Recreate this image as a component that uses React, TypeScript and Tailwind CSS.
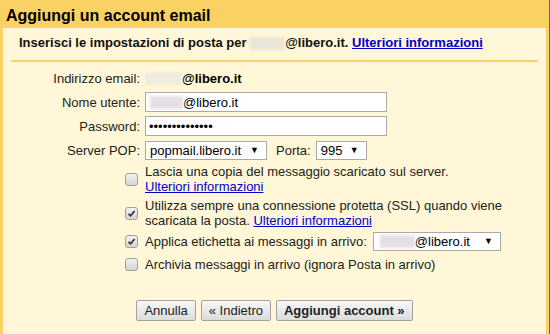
import React from 'react'

const font = "font-['Liberation_Sans',Arial,sans-serif]"

function Blur({ w, tone = 'bg-[#ebe5d8]' }: { w: number; tone?: string }) {
  return <span className={`inline-block h-[13px] align-middle blur-[1.5px] ${tone}`} style={{ width: w }} />
}

function Arrow() {
  return <span className="text-[9px] leading-none text-black">▼</span>
}

function Select({ children, className }: { children: React.ReactNode; className: string }) {
  return (
    <div className={`flex items-center justify-between border border-[#a9a9a9] bg-white pl-[4px] pr-[7px] text-black ${className}`}>
      <span className="flex items-center">{children}</span>
      <Arrow />
    </div>
  )
}

function Checkbox({ checked }: { checked?: boolean }) {
  return (
    <span className="flex h-[13px] w-[13px] items-center justify-center rounded-[3px] border border-[#a0a0a0] bg-gradient-to-b from-[#f2f2f2] to-[#d4d4d4]">
      {checked && (
        <svg width="9" height="9" viewBox="0 0 9 9">
          <path d="M1.5 4.8 L3.6 6.8 L7.6 2" fill="none" stroke="#333" strokeWidth="1.7" />
        </svg>
      )}
    </span>
  )
}

function Row({ label, children, className = '' }: { label: React.ReactNode; children: React.ReactNode; className?: string }) {
  return (
    <div className={`flex items-center ${className}`}>
      <div className="flex w-[137px] shrink-0 justify-end">{label}</div>
      <div className="ml-[5px] flex items-center">{children}</div>
    </div>
  )
}

function Link({ children }: { children: React.ReactNode }) {
  return <span className="text-[#0000cc] underline">{children}</span>
}

function Button({ children, bold }: { children: React.ReactNode; bold?: boolean }) {
  return (
    <button className={`h-[21px] rounded-[2px] border border-[#a3a3a3] bg-gradient-to-b from-[#f8f8f8] to-[#dcdcdc] px-[7px] text-[13px] leading-[15px] text-[#222] ${bold ? 'font-bold' : ''}`}>
      {children}
    </button>
  )
}

export default function App() {
  return (
    <div className={`h-[334px] w-[550px] overflow-hidden border-r border-[#4c66b5] bg-[#fad163] text-[13px] leading-[15px] text-[#222] ${font}`}>
      <div className="h-[28px] pl-[6px] pt-[6px] text-[16px] font-bold leading-[19px] text-black">
        Aggiungi un account email
      </div>
      <div className="mx-[3px] h-[306px] bg-[#fff7d7]">
        {/* intro */}
        <div className="mx-[8px] border-b-2 border-[#fad163] pb-[10px] pl-[8px] pt-[7px] font-bold text-[#111]">
          Inserisci le impostazioni di posta per <Blur w={35} />@libero.it. <Link>Ulteriori informazioni</Link>
        </div>

        {/* form */}
        <div className="flex flex-col pt-[6px]">
          <Row label="Indirizzo email:" className="h-[20px]">
            <Blur w={37} tone="bg-[#f0ebde]" />
            <span className="font-bold text-black">@libero.it</span>
          </Row>
          <Row label="Nome utente:" className="mt-[4px] h-[20px]">
            <div className="flex h-[20px] w-[242px] items-center border border-[#a9a9a9] bg-white pl-[4px] text-black">
              <Blur w={33} tone="bg-[#e6dfe6]" />@libero.it
            </div>
          </Row>
          <Row label="Password:" className="mt-[4px] h-[20px]">
            <div className="flex h-[20px] w-[242px] items-center border border-[#a9a9a9] bg-white pl-[3px] text-black">
              ••••••••••••••
            </div>
          </Row>
          <Row label="Server POP:" className="mt-[5px] h-[19px]">
            <Select className="h-[19px] w-[122px]">popmail.libero.it</Select>
            <span className="ml-[9px]">Porta:</span>
            <Select className="ml-[5px] h-[19px] w-[51px]">995</Select>
          </Row>

          <Row label={<span className="mr-[2px]"><Checkbox /></span>} className="mt-[4px]">
            <span>
              Lascia una copia del messaggio scaricato sul server.
              <br />
              <Link>Ulteriori informazioni</Link>
            </span>
          </Row>
          <Row label={<span className="mr-[2px]"><Checkbox checked /></span>} className="mt-[4px]">
            <span>
              Utilizza sempre una connessione protetta (SSL) quando viene
              <br />
              scaricata la posta. <Link>Ulteriori informazioni</Link>
            </span>
          </Row>
          <Row label={<span className="mr-[2px]"><Checkbox checked /></span>} className="mt-[4px] h-[19px]">
            <span>Applica etichetta ai messaggi in arrivo:</span>
            <Select className="ml-[6px] h-[19px] w-[128px] pl-[6px]">
              <Blur w={35} tone="bg-[#e6dfe6]" />@libero.it
            </Select>
          </Row>
          <Row label={<span className="mr-[2px]"><Checkbox /></span>} className="mt-[6px]">
            <span>Archivia messaggi in arrivo (ignora Posta in arrivo)</span>
          </Row>

          <div className="mt-[28px] flex justify-center gap-[5px]">
            <Button>Annulla</Button>
            <Button>« Indietro</Button>
            <Button bold>Aggiungi account »</Button>
          </div>
        </div>
      </div>
    </div>
  )
}
